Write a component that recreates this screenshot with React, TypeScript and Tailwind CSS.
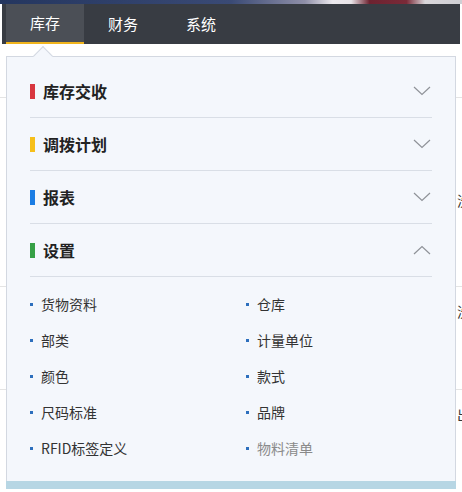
import React from 'react';

const font = { fontFamily: '"Noto Sans CJK SC", "Noto Sans", sans-serif' };

type Section = { title: string; color: string; open?: boolean };

const sections: Section[] = [
  { title: '库存交收', color: 'bg-[#d8363f]' },
  { title: '调拨计划', color: 'bg-[#f6bf1a]' },
  { title: '报表', color: 'bg-[#1b7de4]' },
  { title: '设置', color: 'bg-[#36a046]', open: true },
];

const items = [
  ['货物资料', '仓库'],
  ['部类', '计量单位'],
  ['颜色', '款式'],
  ['尺码标准', '品牌'],
  ['RFID标签定义', '物料清单'],
];

const Chevron = ({ up }: { up?: boolean }) => (
  <svg width="18" height="10" viewBox="0 0 18 10" className="mr-[1px]">
    <polyline
      points={up ? '1,9 9,1.5 17,9' : '1,1 9,8.5 17,1'}
      fill="none"
      stroke="#8f9298"
      strokeWidth="1.2"
    />
  </svg>
);

const Item = ({ label, muted }: { label: string; muted?: boolean }) => (
  <div className="flex items-center h-9">
    <span className="w-[3px] h-[3px] bg-[#2d6fbd] mr-[8px]" />
    <span className={`text-[14px] ${muted ? 'text-[#8a8a8a]' : 'text-[#333]'}`}>{label}</span>
  </div>
);

export default function App() {
  return (
    <div className="relative w-[462px] h-[492px] bg-white overflow-hidden" style={font}>
      <div className="h-[4px] bg-[linear-gradient(90deg,#24365f_0%,#3a4a75_50%,#8f8fa8_66%,#ece9ee_72%,#e8e4e8_76%,#6d2230_80%,#7a2a38_88%,#d9d6da_92%,#cfcfd4_100%)]" />
      <div className="ml-[2px] w-[458px] h-10 bg-[#383c43] flex pl-[4px]">
        <div className="w-[78px] h-full bg-[#4b4f56] border-b-2 border-[#f0b41c] flex items-center justify-center text-white text-[15px] pt-[1px]">
          库存
        </div>
        <div className="w-[78px] flex items-center justify-center text-white text-[15px]">财务</div>
        <div className="w-[78px] flex items-center justify-center text-white text-[15px]">系统</div>
      </div>

      {/* page content under the dropdown */}
      <div className="relative">
        <div className="h-[54px] border-b border-[#e4e4e4]" />
        <div className="flex justify-end">
          <span className="mt-[92px] text-[14px] text-[#333] w-[5px] overflow-hidden">洗</span>
        </div>
        <div className="h-[76px] border-b border-[#e4e4e4]" />
        <div className="flex justify-end">
          <span className="mt-[14px] text-[14px] text-[#333] w-[5px] overflow-hidden">洗</span>
        </div>
        <div className="h-[68px] border-b border-[#e4e4e4]" />
        <div className="flex justify-end">
          <span className="mt-[14px] text-[14px] text-[#333] w-[5px] overflow-hidden">出</span>
        </div>
      </div>

      {/* dropdown */}
      <div className="absolute left-[6px] top-[56px] w-[450px] h-[433px] border border-[#d3d8e1] border-b-0 bg-[#f4f7fc] flex flex-col">
        <div className="absolute left-[29px] -top-[8px] w-[14px] h-[14px] rotate-45 bg-[#f4f7fc] border-l border-t border-[#d3d8e1]" />
        <div className="relative flex-1 px-[23px] pt-[8px]">
          {sections.map((s) => (
            <div key={s.title} className="border-b border-[#d9dee6]">
              <div className="h-[52px] flex items-center justify-between">
                <div className="flex items-center">
                  <span className={`w-[5px] h-[15px] ${s.color} mr-[8px]`} />
                  <span className="text-[16px] font-bold text-[#222]">{s.title}</span>
                </div>
                <Chevron up={s.open} />
              </div>
            </div>
          ))}
          <div className="grid grid-cols-[216px_1fr] pt-[9px]">
            {items.map(([a, b]) => (
              <React.Fragment key={a}>
                <Item label={a} />
                <Item label={b} muted={b === '物料清单'} />
              </React.Fragment>
            ))}
          </div>
        </div>
        <div className="h-[8px] bg-[#b7d6e4] -mx-[1px]" />
      </div>
    </div>
  );
}
